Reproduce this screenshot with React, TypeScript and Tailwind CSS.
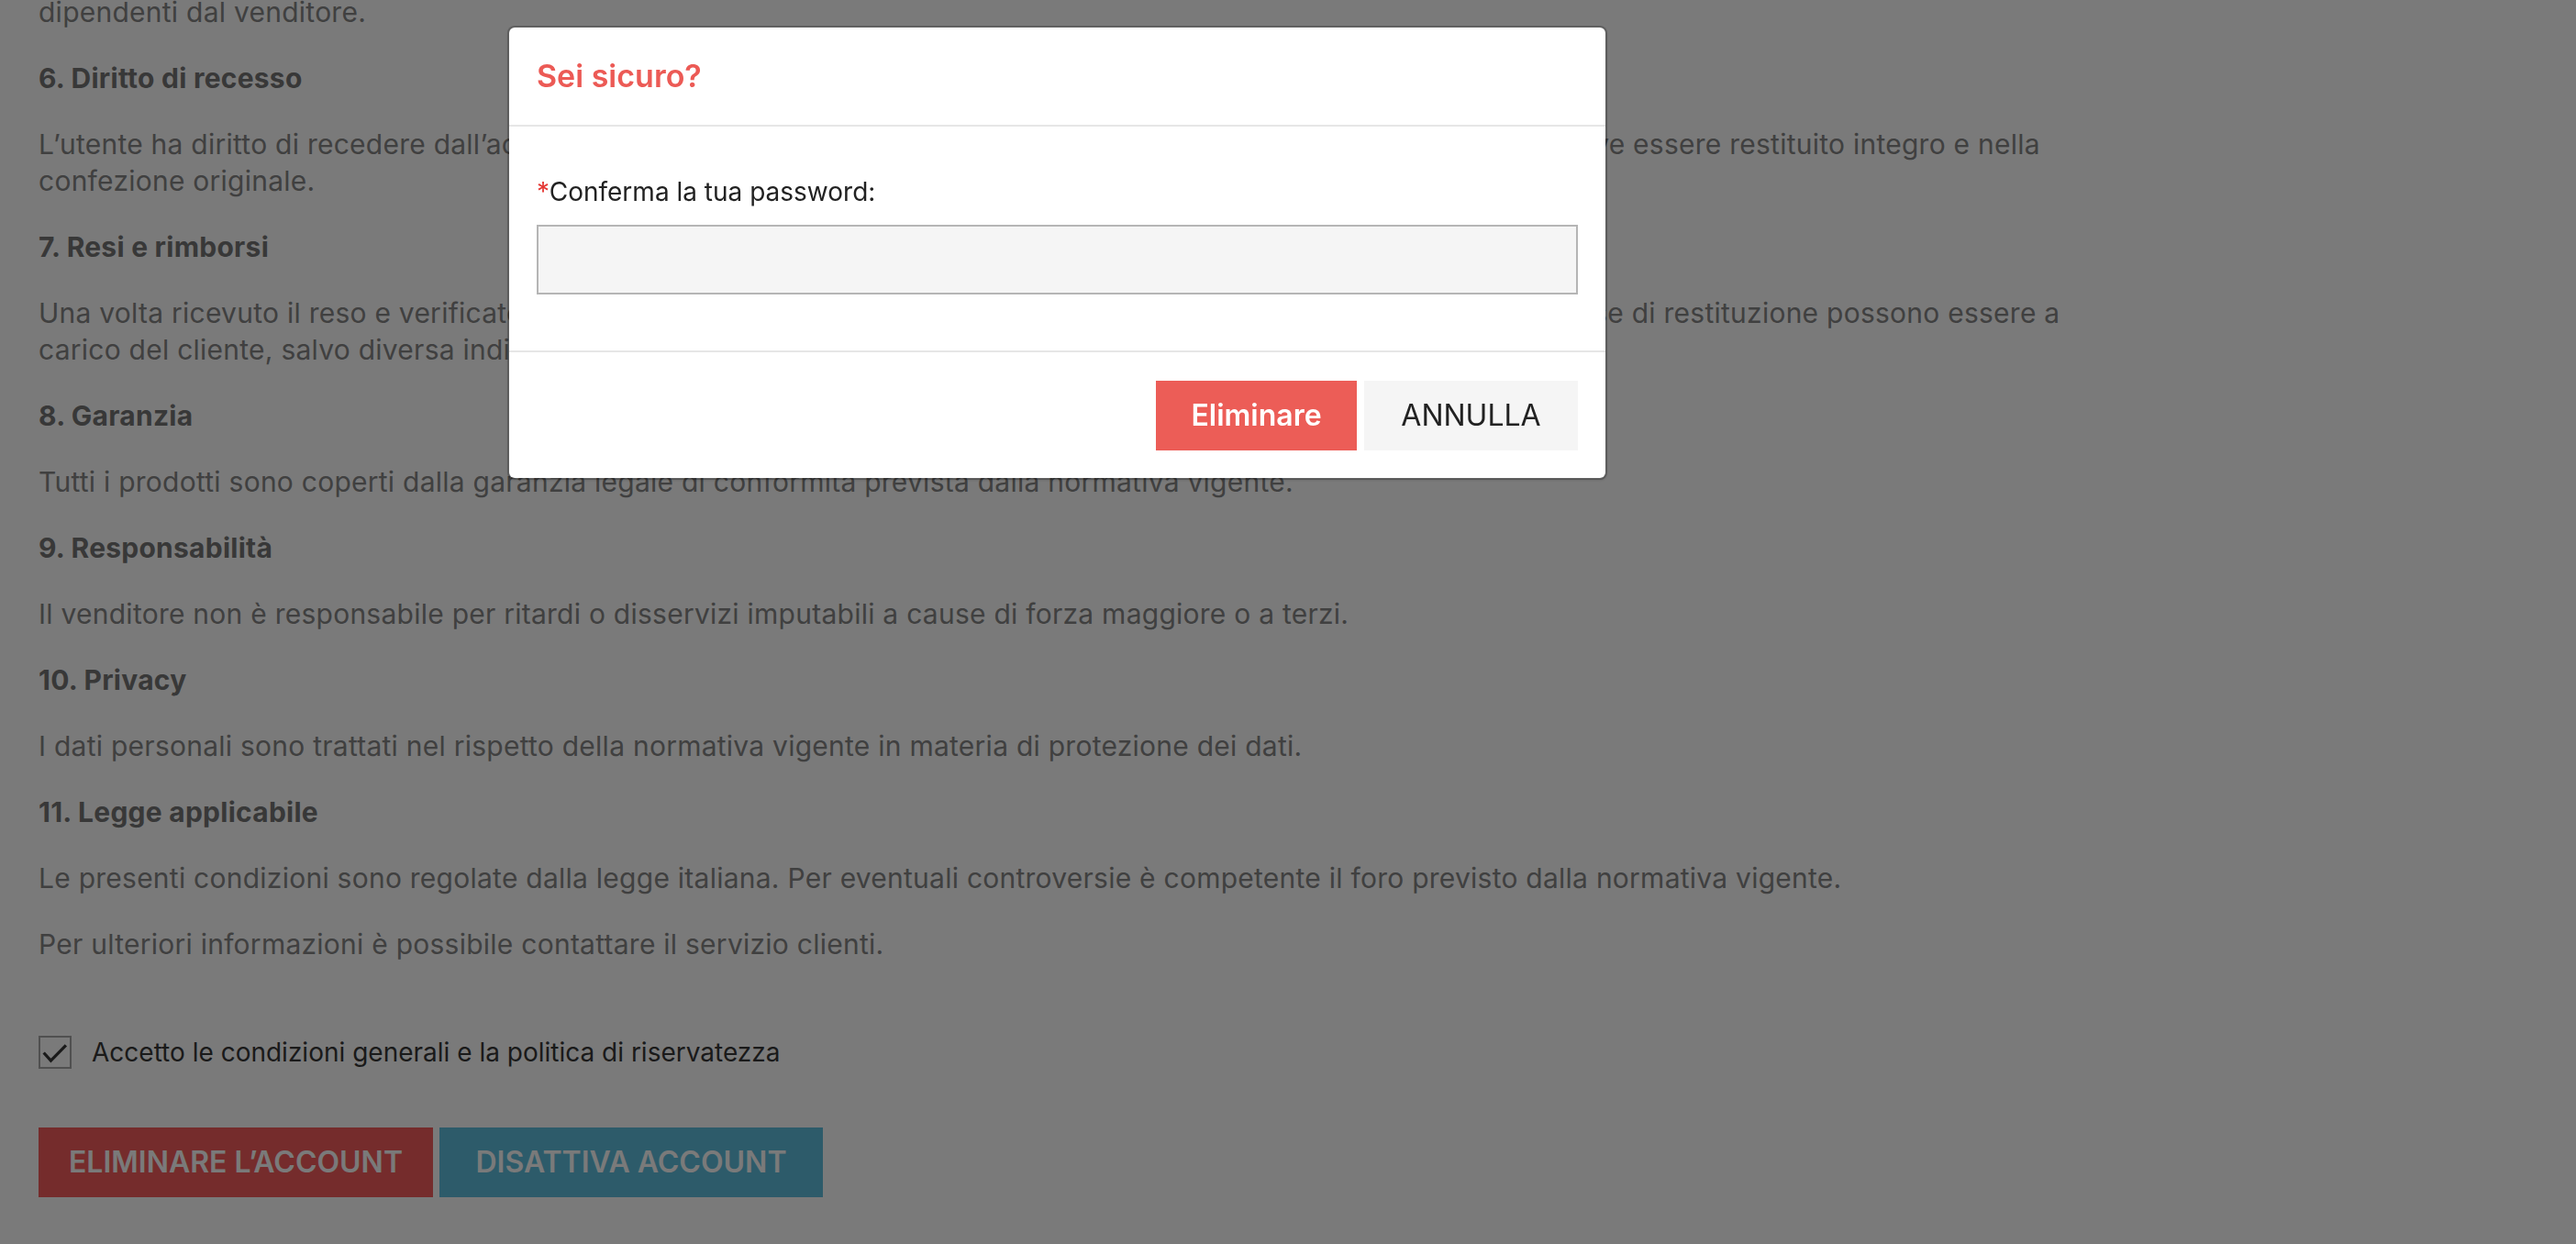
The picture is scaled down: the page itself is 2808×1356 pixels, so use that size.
export default function App() {
  return (
    <div className="relative h-[1356px] overflow-hidden bg-white font-['Inter','Liberation_Sans',sans-serif]">
      {/* Testo condizioni (pagina scrollata) */}
      <div className="-mt-[7px] flex w-[2290px] flex-col gap-8 pl-[42px] text-[30px] leading-[40px] tracking-[0.25px] text-[#868686]">
        <p>dipendenti dal venditore.</p>

        <h3 className="font-bold text-[#767676]">6. Diritto di recesso</h3>
        <p>
          L’utente ha diritto di recedere dall’acquisto entro 14 giorni dalla ricezione senza fornire una motivazione. Il prodotto deve essere restituito integro e nella
          <br />
          confezione originale.
        </p>

        <h3 className="font-bold text-[#767676]">7. Resi e rimborsi</h3>
        <p>
          Una volta ricevuto il reso e verificato lo stato del prodotto, il rimborso verrà effettuato entro 14 giorni. Le eventuali spese di restituzione possono essere a
          <br />
          carico del cliente, salvo diversa indicazione.
        </p>

        <h3 className="font-bold text-[#767676]">8. Garanzia</h3>
        <p>Tutti i prodotti sono coperti dalla garanzia legale di conformità prevista dalla normativa vigente.</p>

        <h3 className="font-bold text-[#767676]">9. Responsabilità</h3>
        <p>Il venditore non è responsabile per ritardi o disservizi imputabili a cause di forza maggiore o a terzi.</p>

        <h3 className="font-bold text-[#767676]">10. Privacy</h3>
        <p>I dati personali sono trattati nel rispetto della normativa vigente in materia di protezione dei dati.</p>

        <h3 className="font-bold text-[#767676]">11. Legge applicabile</h3>
        <p>Le presenti condizioni sono regolate dalla legge italiana. Per eventuali controversie è competente il foro previsto dalla normativa vigente.</p>
        <p>Per ulteriori informazioni è possibile contattare il servizio clienti.</p>
      </div>

      {/* Checkbox */}
      <label className="mt-[78px] flex h-[40px] items-center gap-[22px] pl-[42px] text-[28px] text-[#383838]">
        <span className="flex h-[36px] w-[36px] items-center justify-center border-2 border-[#a8a8a8]">
          <svg width="35" height="35" viewBox="0 0 35 35" fill="none">
            <path d="M4 17.5 L12.5 27 L30.5 8.5" stroke="#383838" strokeWidth="3.5" />
          </svg>
        </span>
        Accetto le condizioni generali e la politica di riservatezza
      </label>

      {/* Bottoni account */}
      <div className="mt-[62px] flex gap-[7px] pl-[42px]">
        <button className="h-[76px] w-[430px] bg-[#f45c5c] text-[32px] font-semibold text-white">ELIMINARE L’ACCOUNT</button>
        <button className="h-[76px] w-[418px] bg-[#5ebedd] text-[32px] font-semibold text-white">DISATTIVA ACCOUNT</button>
      </div>

      {/* Backdrop */}
      <div className="fixed inset-0 bg-black/[0.52]" />

      {/* Modale */}
      <div className="fixed left-[553px] top-[28px] w-[1199px] rounded-[8px] border-2 border-black/20 bg-white bg-clip-padding shadow-sm">
        <div className="border-b-2 border-[#e6e6e6] px-[30px] py-[32px]">
          <h4 className="text-[34px] font-semibold leading-[42px] text-[#ec5a55]">Sei sicuro?</h4>
        </div>
        <div className="px-[30px] pb-[61px] pt-[51px]">
          <label className="mb-4 block text-[28px] leading-[40px] text-[#222]">
            <span className="text-[#e53935]">*</span>Conferma la tua password:
          </label>
          <input type="password" className="block h-[76px] w-full border-2 border-[#b5b5b5] bg-[#f5f5f5] outline-none" />
        </div>
        <div className="flex justify-end gap-[8px] border-t-2 border-[#e6e6e6] px-[30px] pb-[30px] pt-[31px]">
          <button className="h-[76px] w-[219px] bg-[#ec5d57] text-[32px] font-semibold text-white">Eliminare</button>
          <button className="h-[76px] w-[233px] bg-[#f5f5f5] text-[32px] text-[#222]">ANNULLA</button>
        </div>
      </div>
    </div>
  )
}
